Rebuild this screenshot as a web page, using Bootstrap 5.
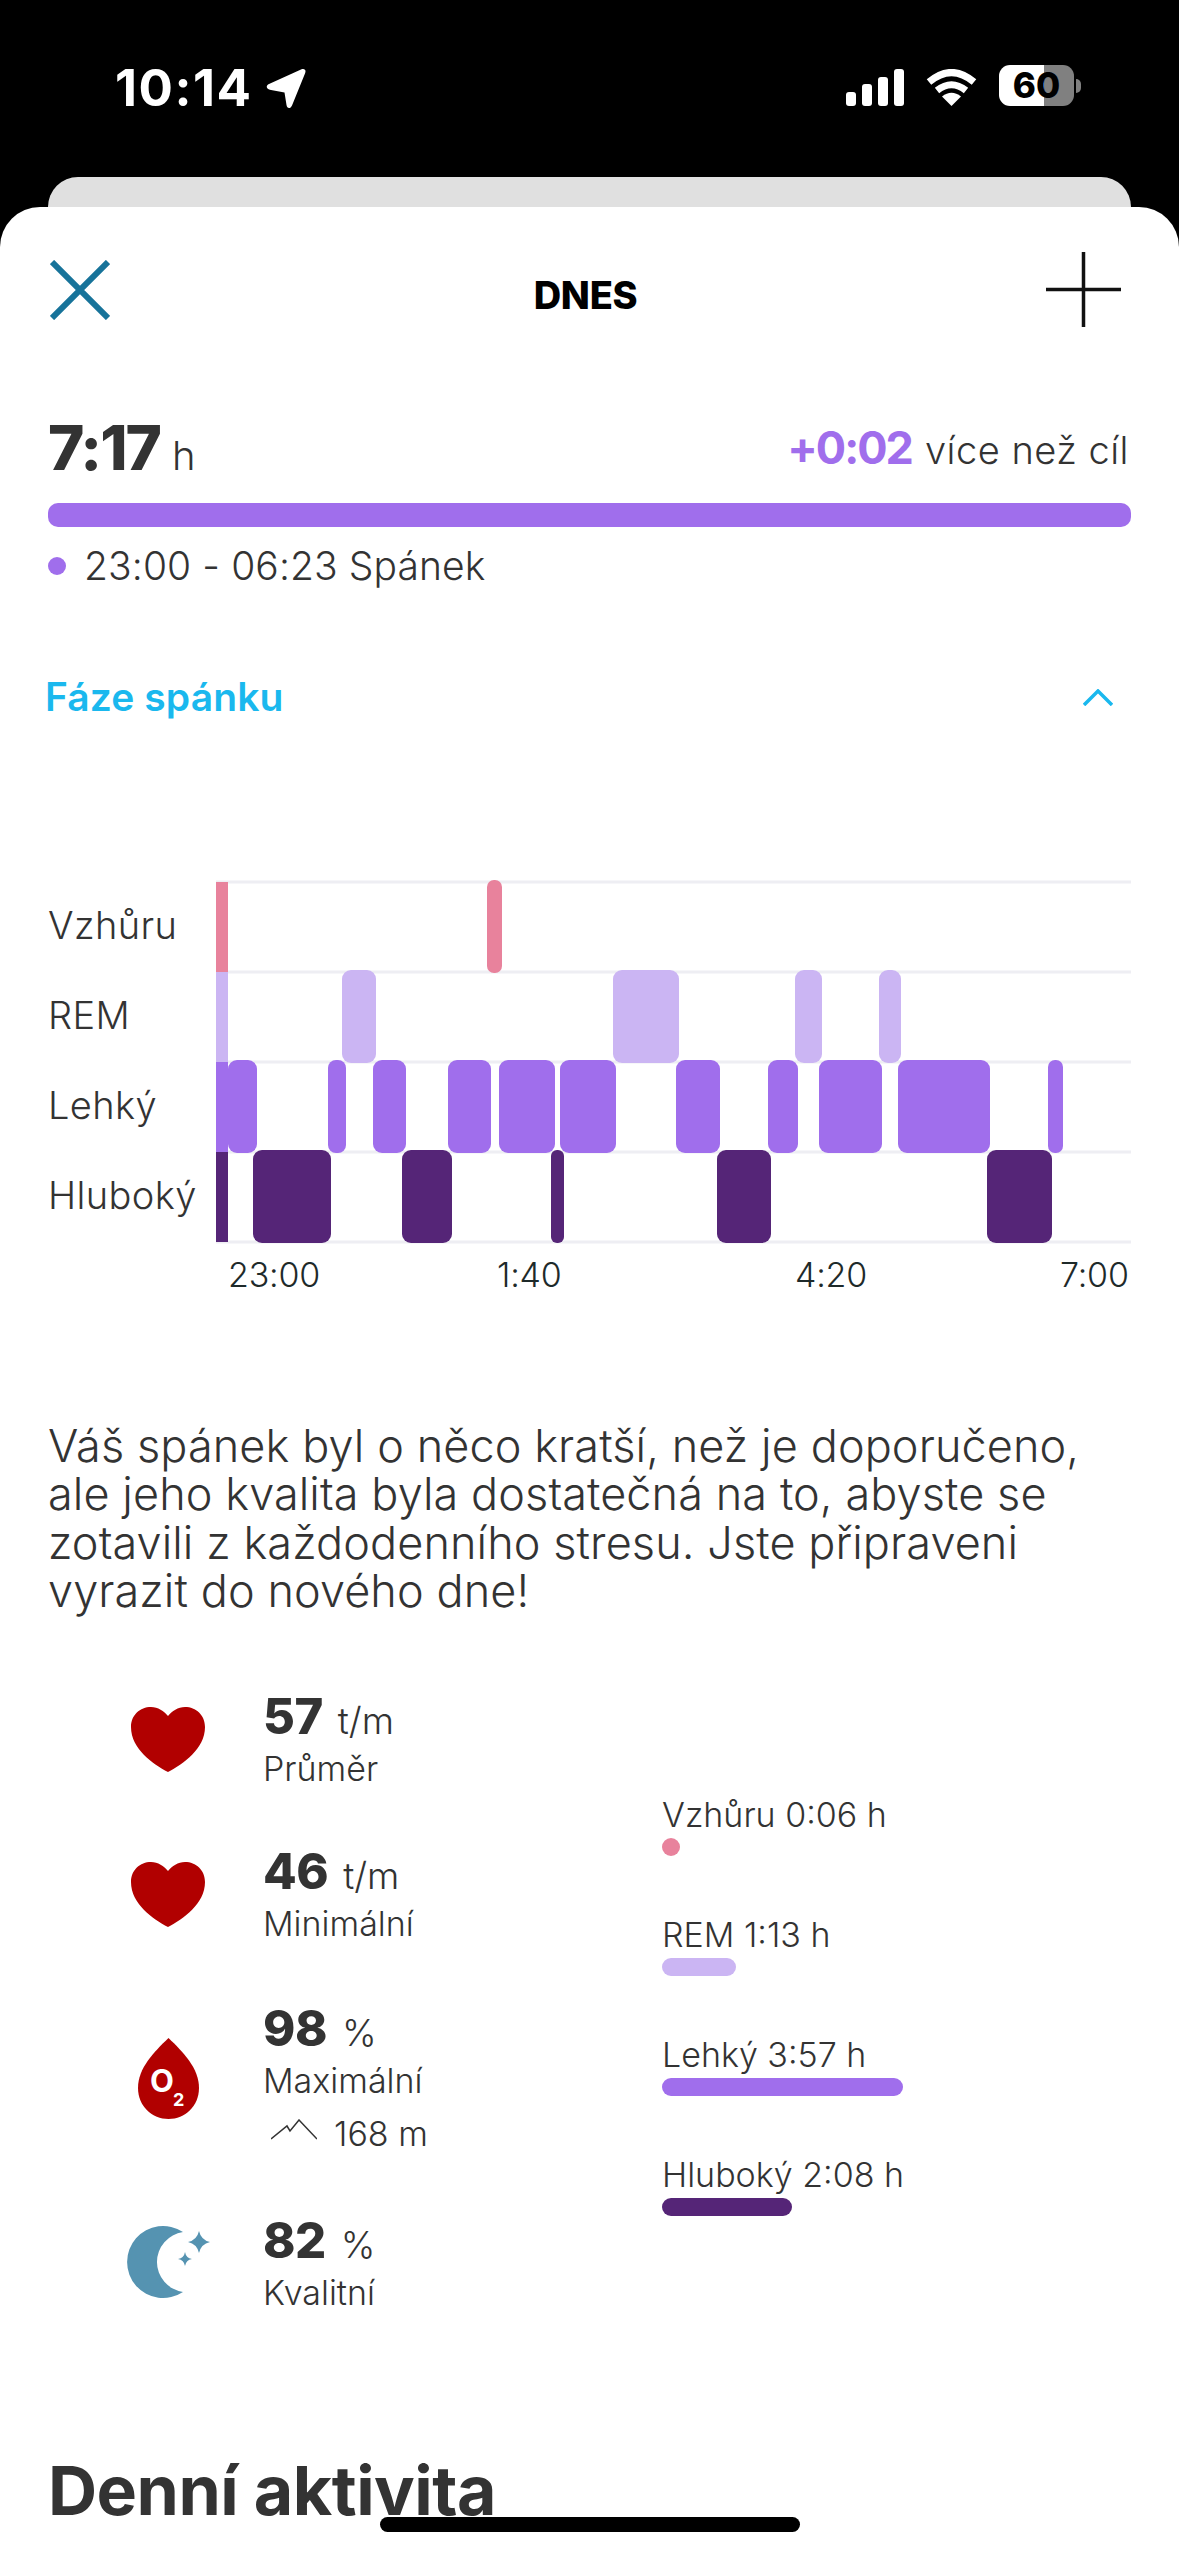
<!DOCTYPE html>
<html lang="cs">
<head>
    <meta charset="utf-8">
    <title>Dnes - spánek</title>
    <link href="https://cdn.jsdelivr.net/npm/bootstrap@5.3.0/dist/css/bootstrap.min.css" rel="stylesheet">
    <style>
        html, body { height: 2556px; overflow: hidden; }
        body { background: #000; color: #333; font-family: Inter, "Noto Sans", sans-serif; }

        .status-bar { height: 177px; padding: 63px 98px 0 115px; color: #fff; }
        .status-time { font: 700 51px/50px Inter, sans-serif; letter-spacing: 1.5px; }
        .status-icons { gap: 22px; padding-top: 2px; }
        .status-arrow { margin-top: 5px; margin-left: 14px; }
        .battery-box { width: 75px; height: 41px; border-radius: 11px; background: linear-gradient(to right, #fff 60%, #808080 60%); color: #000; font: 800 35px/41px Inter, sans-serif; text-align: center; }
        .battery-nub { width: 5px; height: 14px; background: #808080; border-radius: 0 5px 5px 0; margin-left: 2px; }

        .back-sheet { height: 30px; margin: 0 48px; background: #e0e0e0; border-radius: 30px 30px 0 0; }
        .main-sheet { height: 2349px; background: #fff; border-radius: 40px 40px 0 0; padding-top: 45px; position: relative; }

        .top-row { height: 75px; padding: 0 58px 0 50px; }
        .top-side { width: 200px; }
        .top-title { font-size: 38px; line-height: 86px; font-weight: 800; color: #000; letter-spacing: -.3px; }

        .summary-row { padding: 0 48px; margin-top: 91px; height: 60px; }
        .sleep-total { font-size: 62px; line-height: 60px; font-weight: 800; letter-spacing: -2px; }
        .sleep-unit { font-size: 40px; font-weight: 300; letter-spacing: 0; margin-left: 12px; }
        .goal-text { font-size: 38px; line-height: 60px; letter-spacing: .5px; font-weight: 300; padding-right: 2px; }
        .goal-diff { font-size: 45px; font-weight: 700; color: #a06eec; margin-right: 13px; letter-spacing: -2px; }
        .sleep-bar { height: 24px; margin: 25px 48px 0; background: #a06eec; border-radius: 10px; }
        .sleep-range { padding: 0 48px; margin-top: 14px; height: 50px; font-size: 39px; line-height: 50px; gap: 18px; letter-spacing: .1px; font-weight: 300; }
        .range-dot { width: 18px; height: 18px; border-radius: 50%; background: #a06eec; }

        .phases-row { padding: 0 66px 0 45px; margin-top: 81px; height: 50px; }
        .phases-title { font-size: 39px; line-height: 50px; font-weight: 600; color: #1ab8ee; letter-spacing: .1px; }

        .chart-wrap { padding-left: 48px; margin-top: 158px; }
        .chart-labels { width: 168px; font-size: 38px; line-height: 90px; letter-spacing: .4px; font-weight: 300; }
        .chart-axis { margin-left: 168px; padding-top: 9px; font-size: 34px; line-height: 44px; color: #1e2a2a; letter-spacing: -.2px; font-weight: 300; }
        .axis-first { margin-left: 12px; width: 269px; }
        .axis-second { width: 298px; }
        .axis-third { width: 265px; }

        .summary-text { padding: 0 48px; margin-top: 125px; font-size: 45px; line-height: 48.4px; letter-spacing: .1px; font-weight: 300; }

        .stats-wrap { padding-left: 48px; margin-top: 76px; }
        .stats-left { width: 614px; }
        .stat-icon { width: 215px; }
        .stat-heart { margin: 14px 0 0 83px; }
        .stat-drop { margin: 34px 0 0 90px; }
        .stat-moon { margin: 8px 0 0 79px; }
        .stat-value { font-size: 49px; line-height: 50px; font-weight: 800; letter-spacing: -.5px; }
        .stat-unit { font-size: 37px; font-weight: 300; margin-left: 15px; letter-spacing: 0; }
        .stat-label { font-size: 34px; line-height: 40px; margin-top: 3px; font-weight: 300; }
        .stat-alt { font-size: 34px; line-height: 40px; margin-top: 13px; padding-left: 8px; gap: 17px; font-weight: 300; }
        .stat-alt svg { margin-top: -8px; }
        .legend-col { padding-top: 103px; }
        .legend-item { height: 120px; }
        .legend-name { font-size: 34px; line-height: 40px; height: 43px; font-weight: 300; }
        .legend-bar { height: 18px; border-radius: 9px; }

        .activity-title { position: absolute; left: 48px; top: 2243px; margin: 0; font-size: 68px; line-height: 80px; font-weight: 700; letter-spacing: -.5px; }
        .home-bar { position: absolute; left: 380px; top: 2310px; width: 420px; height: 15px; border-radius: 8px; background: #000; }

        .bg-awake { background: #e8829c; }
        .bg-rem { background: #cbb5f3; }
        .bg-light-phase { background: #a06eec; }
        .bg-deep { background: #552577; }
    </style>
</head>
<body>
<div class="status-bar d-flex justify-content-between">
    <div class="d-flex align-items-start">
        <div class="status-time">10:14</div>
        <svg width="40" height="41" viewBox="0 0 40 41" class="status-arrow" fill="#fff"><path d="M35 1.5C38.5 0 40.500 2 39 5.500L26 37.500C24.500 41 21 41 20.500 37L18.500 24.500L5 22C0 21.500-.5 17.500 3 16Z"/></svg>
    </div>
    <div class="status-icons d-flex align-items-start">
        <svg width="58" height="37" viewBox="0 0 58 37" class="mt-1" fill="#fff">
            <rect x="0" y="23" width="10" height="14" rx="3"/>
            <rect x="16" y="15" width="10" height="22" rx="3"/>
            <rect x="32" y="8" width="10" height="29" rx="3"/>
            <rect x="48" y="0" width="10" height="37" rx="3"/>
        </svg>
        <svg width="51" height="37" viewBox="0 0 51 37" class="mt-1" fill="none" stroke="#fff" stroke-width="7">
            <path d="M3 13Q25.500-6 48 13"/>
            <path d="M11 21.500Q25.500 10 40 21.500"/>
            <path d="M25.500 37L16 27.500Q25.500 20 35 27.500Z" fill="#fff" stroke="none"/>
        </svg>
        <div class="d-flex align-items-center">
            <div class="battery-box">60</div>
            <div class="battery-nub"></div>
        </div>
    </div>
</div>
<div class="back-sheet"></div>
<div class="main-sheet">
    <div class="top-row d-flex justify-content-between">
        <div class="top-side">
            <svg width="60" height="60" viewBox="0 0 60 60" class="mt-2" stroke="#17739a" stroke-width="6"><path d="M2 2L58 58M58 2L2 58"/></svg>
        </div>
        <div class="top-title">DNES</div>
        <div class="top-side text-end">
            <svg width="75" height="75" viewBox="0 0 75 75" stroke="#111" stroke-width="3.500"><path d="M37.500 0V75M0 37.500H75"/></svg>
        </div>
    </div>

    <div class="summary-row d-flex justify-content-between">
        <div class="sleep-total">7:17<span class="sleep-unit">h</span></div>
        <div class="goal-text"><span class="goal-diff">+0:02</span>více než cíl</div>
    </div>
    <div class="sleep-bar"></div>
    <div class="sleep-range d-flex align-items-center">
        <span class="range-dot"></span>
        <span>23:00 - 06:23 Spánek</span>
    </div>

    <div class="phases-row d-flex justify-content-between align-items-center">
        <div class="phases-title">Fáze spánku</div>
        <svg width="30" height="17" viewBox="0 0 30 17" fill="none" stroke="#1ab8ee" stroke-width="3.500"><path d="M1 16L15 2L29 16"/></svg>
    </div>

    <div class="chart-wrap">
        <div class="d-flex">
            <div class="chart-labels">
                <div>Vzhůru</div>
                <div>REM</div>
                <div>Lehký</div>
                <div>Hluboký</div>
            </div>
            <svg width="915" height="364" viewBox="0 0 915 364">
                <g stroke="#eeeef3" stroke-width="3">
                    <path d="M0 2H915M0 92H915M0 182H915M0 272H915M0 362H915"/>
                </g>
                <g fill="#e8829c">
                    <rect x="0" y="2" width="12" height="90"/>
                    <rect x="271" y="0" width="15" height="93" rx="7"/>
                </g>
                <g fill="#cbb5f3">
                    <rect x="0" y="92" width="12" height="90"/>
                    <rect x="126" y="90" width="34" height="93" rx="9"/>
                    <rect x="397" y="90" width="66" height="93" rx="9"/>
                    <rect x="579" y="90" width="27" height="93" rx="9"/>
                    <rect x="663" y="90" width="22" height="93" rx="9"/>
                </g>
                <g fill="#a06eec">
                    <rect x="0" y="182" width="12" height="90"/>
                    <rect x="12" y="180" width="29" height="93" rx="9"/>
                    <rect x="112" y="180" width="18" height="93" rx="8"/>
                    <rect x="157" y="180" width="33" height="93" rx="9"/>
                    <rect x="232" y="180" width="43" height="93" rx="9"/>
                    <rect x="283" y="180" width="56" height="93" rx="9"/>
                    <rect x="344" y="180" width="56" height="93" rx="9"/>
                    <rect x="460" y="180" width="44" height="93" rx="9"/>
                    <rect x="552" y="180" width="30" height="93" rx="9"/>
                    <rect x="603" y="180" width="63" height="93" rx="9"/>
                    <rect x="682" y="180" width="92" height="93" rx="9"/>
                    <rect x="832" y="180" width="15" height="93" rx="7"/>
                </g>
                <g fill="#552577">
                    <rect x="0" y="272" width="12" height="90"/>
                    <rect x="37" y="270" width="78" height="93" rx="9"/>
                    <rect x="186" y="270" width="50" height="93" rx="9"/>
                    <rect x="335" y="270" width="13" height="93" rx="6"/>
                    <rect x="501" y="270" width="54" height="93" rx="9"/>
                    <rect x="771" y="270" width="65" height="93" rx="9"/>
                </g>
            </svg>
        </div>
        <div class="chart-axis d-flex">
            <span class="axis-first">23:00</span>
            <span class="axis-second">1:40</span>
            <span class="axis-third">4:20</span>
            <span>7:00</span>
        </div>
    </div>

    <p class="summary-text mb-0">Váš spánek byl o něco kratší, než je doporučeno, ale jeho kvalita byla dostatečná na to, abyste se zotavili z každodenního stresu. Jste připraveni vyrazit do nového dne!</p>

    <div class="stats-wrap d-flex">
        <div class="stats-left">
            <div class="d-flex" style="height:155px">
                <div class="stat-icon"><svg width="74" height="67" viewBox="0 0 74 65" class="stat-heart" fill="#b10000"><path d="M37 65C22 57 0 42 0 20C0 8 9 0 20 0C27 0 33 4 37 9C41 4 47 0 54 0C65 0 74 8 74 20C74 42 52 57 37 65Z"/></svg></div>
                <div>
                    <div class="stat-value">57<span class="stat-unit">t/m</span></div>
                    <div class="stat-label">Průměr</div>
                </div>
            </div>
            <div class="d-flex" style="height:157px">
                <div class="stat-icon"><svg width="74" height="67" viewBox="0 0 74 65" class="stat-heart" fill="#b10000"><path d="M37 65C22 57 0 42 0 20C0 8 9 0 20 0C27 0 33 4 37 9C41 4 47 0 54 0C65 0 74 8 74 20C74 42 52 57 37 65Z"/></svg></div>
                <div>
                    <div class="stat-value">46<span class="stat-unit">t/m</span></div>
                    <div class="stat-label">Minimální</div>
                </div>
            </div>
            <div class="d-flex" style="height:212px">
                <div class="stat-icon"><svg width="61" height="81" viewBox="0 0 61 81" class="stat-drop" fill="#b10000">
                    <path d="M30.500 0C45 14 61 30 61 50C61 68 47 81 30.500 81C14 81 0 68 0 50C0 30 16 14 30.500 0Z"/>
                    <text x="12" y="54" fill="#fff" font-size="31" font-weight="700" font-family="Inter, sans-serif">O</text>
                    <text x="35" y="68" fill="#fff" font-size="18" font-weight="700" font-family="Inter, sans-serif">2</text>
                </svg></div>
                <div>
                    <div class="stat-value">98<span class="stat-unit">%</span></div>
                    <div class="stat-label">Maximální</div>
                    <div class="stat-alt d-flex align-items-center">
                        <svg width="46" height="22" viewBox="0 0 46 22" fill="none" stroke="#333" stroke-width="1.500"><path d="M0 20L16 7L19 12L28 1L46 20"/></svg>
                        <span>168 m</span>
                    </div>
                </div>
            </div>
            <div class="d-flex">
                <div class="stat-icon"><svg width="84" height="76" viewBox="0 0 84 76" fill="#5593b1" class="stat-moon">
                    <path d="M56 8A36 36 0 1 0 56 68A30.300 30.300 0 0 1 56 8Z"/>
                    <path d="M72 7Q74 16 83 18Q74 20 72 29Q70 20 61 18Q70 16 72 7Z"/>
                    <path d="M58 28Q59 34 65 35Q59 36 58 42Q57 36 51 35Q57 34 58 28Z"/>
                </svg></div>
                <div>
                    <div class="stat-value">82<span class="stat-unit">%</span></div>
                    <div class="stat-label">Kvalitní</div>
                </div>
            </div>
        </div>
        <div class="legend-col">
            <div class="legend-item">
                <div class="legend-name">Vzhůru 0:06 h</div>
                <div class="legend-bar bg-awake" style="width:18px"></div>
            </div>
            <div class="legend-item">
                <div class="legend-name">REM 1:13 h</div>
                <div class="legend-bar bg-rem" style="width:74px"></div>
            </div>
            <div class="legend-item">
                <div class="legend-name">Lehký 3:57 h</div>
                <div class="legend-bar bg-light-phase" style="width:241px"></div>
            </div>
            <div class="legend-item">
                <div class="legend-name">Hluboký 2:08 h</div>
                <div class="legend-bar bg-deep" style="width:130px"></div>
            </div>
        </div>
    </div>

    <h2 class="activity-title">Denní aktivita</h2>
    <div class="home-bar"></div>
</div>
<script src="https://cdn.jsdelivr.net/npm/bootstrap@5.3.0/dist/js/bootstrap.bundle.min.js"></script>
</body>
</html>
